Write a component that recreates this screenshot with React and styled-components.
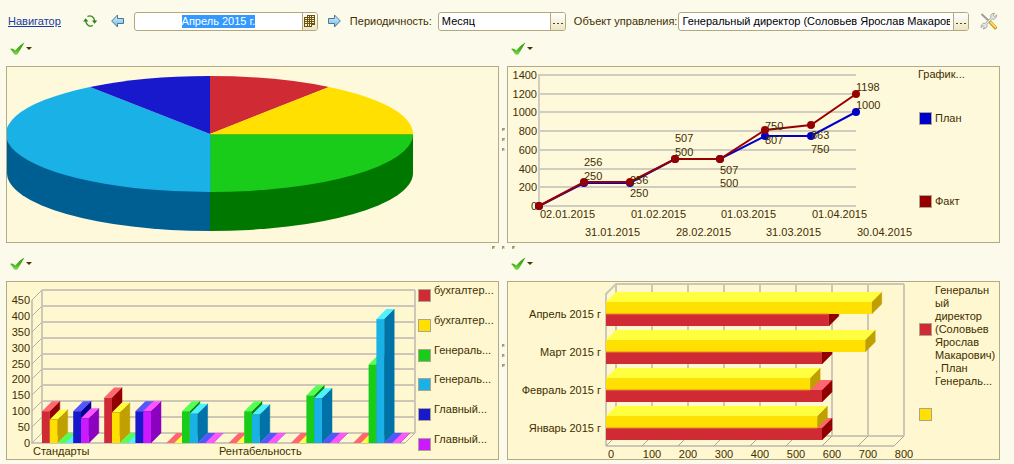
import React, { useEffect, useRef } from 'react';
import styled, { createGlobalStyle } from 'styled-components';

const COLORS = {
  red: { front: '#d02b34', top: '#ff6670', side: '#900000' },
  yellow: { front: '#ffe000', top: '#ffff40', side: '#c0a000' },
  green: { front: '#1acc1a', top: '#55ff55', side: '#008a00' },
  cyan: { front: '#1ab2e6', top: '#50f0ff', side: '#0072a8' },
  blue: { front: '#1818cc', top: '#5555ff', side: '#000090' },
  magenta: { front: '#cc1aff', top: '#ff55ff', side: '#8c00c0' },
};

const DEPTH = 10;

const App = () => {
  return (
    <>
      <GlobalStyle />
      <StylePage>
        <Toolbar />
        <StyleDashboard>
          <Widget title='Структура'>
            <PieChart />
          </Widget>
          <Splitter />
          <Widget title='График'>
            <LineChart />
            <StyleLegend $gap='70px' $top='1px'>
              <StyleLegendTitle>График...</StyleLegendTitle>
              <StyleLegendItem $align='center'>
                <StyleSwatch $color='#0000cc' />
                План
              </StyleLegendItem>
              <StyleLegendItem $align='center'>
                <StyleSwatch $color='#960000' />
                Факт
              </StyleLegendItem>
            </StyleLegend>
          </Widget>
          <StyleRowSplitter>
            <Dots />
          </StyleRowSplitter>
          <Widget title='Стандарты' dark>
            <ColumnChart />
            <StyleColumnLegend>
              {COLUMN_SERIES.map(({ color, label }, i) => (
                <StyleLegendItem key={i} $align='flex-end'>
                  <StyleSwatch $color={COLORS[color].front} />
                  <StyleRaised>{label}</StyleRaised>
                </StyleLegendItem>
              ))}
            </StyleColumnLegend>
          </Widget>
          <Splitter />
          <Widget title='План по месяцам' dark>
            <BarChart />
            <StyleLegend $gap='0' $top='2px'>
              <StyleLegendItem $align='center'>
                <StyleSwatch $color={COLORS.red.front} />
                <StyleLines>
                  {'Генеральн\nый\nдиректор\n(Соловьев\nЯрослав\nМакарович)\n, План'}
                </StyleLines>
              </StyleLegendItem>
              <StyleLegendItem $align='center'>
                <StyleSwatch $color={COLORS.yellow.front} />
                <StyleTall>Генераль...</StyleTall>
              </StyleLegendItem>
            </StyleLegend>
          </Widget>
        </StyleDashboard>
      </StylePage>
    </>
  );
};

export default App;

const Toolbar = () => {
  const dateRef = useRef(null);

  useEffect(() => {
    dateRef.current.focus();
    dateRef.current.select();
  }, []);

  return (
    <StyleToolbar>
      <StyleNavLink href='#navigator'>Навигатор</StyleNavLink>
      <StyleIconButton type='button' aria-label='Обновить' $left='21px'>
        <RefreshIcon />
      </StyleIconButton>
      <StyleIconButton type='button' aria-label='Предыдущий период' $left='13px'>
        <ArrowIcon id='prev' />
      </StyleIconButton>
      <StyleField $width='184px' $left='9px'>
        <StyleInput ref={dateRef} aria-label='Период' defaultValue='Апрель 2015 г.' $center />
        <StyleFieldButton type='button' aria-label='Выбрать период'>
          <CalendarIcon />
        </StyleFieldButton>
      </StyleField>
      <StyleIconButton type='button' aria-label='Следующий период' $left='9px'>
        <ArrowIcon id='next' flip />
      </StyleIconButton>
      <StyleLabel htmlFor='period' $left='9px'>
        Периодичность:
      </StyleLabel>
      <StyleField $width='128px' $left='6px'>
        <StyleInput id='period' defaultValue='Месяц' />
        <StyleFieldButton type='button' aria-label='Выбрать периодичность'>
          <EllipsisIcon />
        </StyleFieldButton>
      </StyleField>
      <StyleLabel htmlFor='manager' $left='8px'>
        Объект управления:
      </StyleLabel>
      <StyleField $grow $left='1px'>
        <StyleInput id='manager' defaultValue='Генеральный директор (Соловьев Ярослав Макаров' />
        <StyleFieldButton type='button' aria-label='Выбрать объект'>
          <EllipsisIcon />
        </StyleFieldButton>
      </StyleField>
      <StyleIconButton type='button' aria-label='Настройки' $left='11px'>
        <ToolsIcon />
      </StyleIconButton>
    </StyleToolbar>
  );
};

const Widget = ({ title, dark, children }) => (
  <StyleWidget aria-label={title}>
    <StyleMenuButton type='button' aria-label={`Действия: ${title}`}>
      <CheckIcon />
      <StyleCaret />
    </StyleMenuButton>
    <StylePanel $dark={dark}>{children}</StylePanel>
  </StyleWidget>
);

const Dots = () => (
  <>
    <StyleDot />
    <StyleDot />
    <StyleDot />
  </>
);

const Splitter = () => (
  <StyleSplitter>
    <Dots />
  </StyleSplitter>
);

/* charts */

const PieChart = () => (
  <StyleChart viewBox='0 0 491 175' role='img' aria-label='Круговая диаграмма'>
    <path d='M0 67 V106 A203 58 0 0 0 203 164 V67 Z' fill='#005f92' />
    <path d='M406 67 V106 A203 58 0 0 1 203 164 V67 Z' fill='#007800' />
    <path d='M203 67 V9 A203 58 0 0 1 322 20 Z' fill='#d02b34' />
    <path d='M203 67 L322 20 A203 58 0 0 1 406 67 Z' fill='#ffe000' />
    <path d='M203 67 H406 A203 58 0 0 1 203 125 Z' fill='#1acc1a' />
    <path d='M203 67 V125 A203 58 0 0 1 83 20 Z' fill='#1ab2e6' />
    <path d='M203 67 L83 20 A203 58 0 0 1 203 9 Z' fill='#1818cc' />
    <path d='M203.5 67 V125' stroke='#19b478' />
    <path d='M203 67.5 H406' stroke='#6dbb0c' />
  </StyleChart>
);

const PLAN = [0, 250, 250, 500, 500, 750, 750, 1000];
const FACT = [0, 256, 256, 507, 507, 807, 863, 1198];
const DATES = [
  '02.01.2015',
  '31.01.2015',
  '01.02.2015',
  '28.02.2015',
  '01.03.2015',
  '31.03.2015',
  '01.04.2015',
  '30.04.2015',
];
// [point index, text, baseline]
const POINT_LABELS = [
  [1, 256, 99],
  [1, 250, 113],
  [2, 256, 117],
  [2, 250, 130],
  [3, 507, 75],
  [3, 500, 89],
  [4, 507, 107],
  [4, 500, 120],
  [5, 750, 63],
  [5, 807, 77],
  [6, 863, 72],
  [6, 750, 86],
  [7, 1198, 24],
  [7, 1000, 42],
];

const lineX = (i) => Math.round(31 + (i * 317) / 7);
const lineY = (value) => Math.round(139 - (value * 131) / 1400);

const LineChart = () => {
  const ticks = [0, 200, 400, 600, 800, 1000, 1200, 1400];
  const series = [
    { values: PLAN, color: '#0000cc' },
    { values: FACT, color: '#960000' },
  ];

  return (
    <StyleChart viewBox='0 0 410 175' role='img' aria-label='План и факт'>
      <g stroke='#d0ccc0' strokeWidth='2'>
        {ticks.map((tick) => (
          <line key={tick} x1='31' x2='348' y1={lineY(tick)} y2={lineY(tick)} />
        ))}
        <line x1='31' x2='31' y1='7' y2='139' />
      </g>
      {ticks.map((tick) => (
        <text key={tick} x='29' y={lineY(tick) + 4} textAnchor='end'>
          {tick}
        </text>
      ))}
      {series.map(({ values, color }) => (
        <g key={color} fill={color}>
          <polyline
            points={values.map((v, i) => `${lineX(i)},${lineY(v)}`).join(' ')}
            fill='none'
            stroke={color}
            strokeWidth='2'
          />
          {values.map((v, i) => (
            <circle key={i} cx={lineX(i)} cy={lineY(v)} r='4' />
          ))}
        </g>
      ))}
      {POINT_LABELS.map(([i, text, y]) => (
        <text key={`${i}-${text}`} x={lineX(i)} y={y}>
          {text}
        </text>
      ))}
      {DATES.map((date, i) => (
        <text key={date} x={lineX(i) + 1} y={i % 2 ? 169 : 151}>
          {date}
        </text>
      ))}
    </StyleChart>
  );
};

const COLUMN_SERIES = [
  { color: 'red', label: 'бухгалтер...', values: [100, 143, 0, 0, 0, 0] },
  { color: 'yellow', label: 'бухгалтер...', values: [74, 96, 0, 0, 0, 0] },
  { color: 'green', label: 'Генераль...', values: [0, 0, 100, 100, 150, 247] },
  { color: 'cyan', label: 'Генераль...', values: [0, 0, 92, 90, 141, 390] },
  { color: 'blue', label: 'Главный...', values: [100, 100, 0, 0, 0, 0] },
  { color: 'magenta', label: 'Главный...', values: [78, 100, 0, 0, 0, 0] },
];

// A box drawn with an oblique projection: front, top and right faces.
const Box = ({ x, y, width, height, color }) => {
  const { front, top, side } = COLORS[color];
  const right = x + width;
  const bottom = y + height;

  return (
    <>
      <path d={`M${right} ${y} l${DEPTH} ${-DEPTH} V${bottom - DEPTH} L${right} ${bottom} Z`} fill={side} stroke={side} strokeWidth='0.5' />
      <path d={`M${x} ${y} l${DEPTH} ${-DEPTH} h${width} L${right} ${y} Z`} fill={top} />
      {height > 0 && <rect x={x} y={y} width={width} height={height} fill={front} />}
    </>
  );
};

const ColumnChart = () => {
  const ticks = [0, 50, 100, 150, 200, 250, 300, 350, 400, 450];
  const scale = 143 / 450;
  const groups = [0, 1, 2, 3, 4, 5];

  return (
    <StyleChart viewBox='0 0 410 177' role='img' aria-label='Показатели по сотрудникам'>
      <g stroke='#cdc8b6' strokeWidth='2' fill='none'>
        {ticks.map((tick) => (
          <path key={tick} d={`M35 ${Math.round(151 - tick * scale)} H408`} />
        ))}
        <path d='M25 18 V161 H398 M408 151 V8 M35 8 V151' />
      </g>
      <g stroke='#b5b0a2'>
        {ticks.map((tick) => (
          <path key={tick} d={`M25 ${Math.round(161 - tick * scale)} l10 -10`} />
        ))}
        <path d='M398 161 l10 -10' />
      </g>
      {ticks.map((tick) => (
        <text key={tick} x='23' y={Math.round(165 - tick * scale)} textAnchor='end'>
          {tick}
        </text>
      ))}
      {groups.map((group) =>
        COLUMN_SERIES.map(({ color, values }, i) => {
          const height = values[group] * scale;
          return (
            <Box
              key={`${group}-${color}`}
              x={35 + group * 62.2 + i * 7.8}
              y={161 - height}
              width={7.8}
              height={height}
              color={color}
            />
          );
        })
      )}
      <text x='26' y='173'>
        Стандарты
      </text>
      <text x='212' y='173'>
        Рентабельность
      </text>
    </StyleChart>
  );
};

const MONTHS = [
  { name: 'Апрель 2015 г', plan: 619, fact: 738 },
  { name: 'Март 2015 г', plan: 600, fact: 720 },
  { name: 'Февраль 2015 г', plan: 600, fact: 567 },
  { name: 'Январь 2015 г', plan: 600, fact: 587 },
];

const BarChart = () => {
  const ticks = [0, 100, 200, 300, 400, 500, 600, 700, 800];

  return (
    <StyleChart viewBox='0 0 410 177' role='img' aria-label='План по месяцам'>
      <g stroke='#cdc8b6' strokeWidth='2' fill='none'>
        {ticks.map((tick) => {
          const x = 108 + tick * 0.36;
          return <path key={tick} d={`M${x} 2 V154`} />;
        })}
        <path d='M98 164 V12 L108 2 H396 M108 154 H396 M98 164 H386' />
      </g>
      <g stroke='#a8a498'>
        {ticks.map((tick) => {
          const x = 108 + tick * 0.36;
          return <path key={tick} d={`M${x} 154 l-10 10`} />;
        })}
      </g>
      {ticks.map((tick) => (
        <text key={tick} x={tick ? 108 + tick * 0.36 : 103} y='176' textAnchor='middle'>
          {tick}
        </text>
      ))}
      {MONTHS.map(({ name, plan, fact }, i) => (
        <g key={name}>
          <Box x={98} y={32 + i * 38} width={plan * 0.36} height={12} color='red' />
          <Box x={98} y={20 + i * 38} width={fact * 0.36} height={12} color='yellow' />
          <path d={`M98 ${32 + i * 38} h${Math.min(plan, fact) * 0.36}`} stroke='#e8862a' />
          <text x='93' y={36 + i * 38} textAnchor='end'>
            {name}
          </text>
        </g>
      ))}
    </StyleChart>
  );
};

/* icons */

const RefreshIcon = () => (
  <svg width='16' height='14' viewBox='0 0 16 14' aria-hidden='true'>
    <g fill='none' stroke='#3a8f1c' strokeWidth='1.4'>
      <path d='M5.5 2.6 C8 1 12.2 2.4 12.6 7' />
      <path d='M10.8 11.4 C8.3 13 4.1 11.6 3.7 7' />
    </g>
    <path d='M10 6.5 H15.2 L12.6 9.8 Z' fill='#2f7d17' />
    <path d='M1.1 7.5 H6.3 L3.7 4.2 Z' fill='#2f7d17' />
  </svg>
);

const ArrowIcon = ({ id, flip }) => (
  <svg width='14' height='14' viewBox='0 0 14 14' aria-hidden='true'>
    <defs>
      <linearGradient id={id} x1='0' y1='0' x2='0' y2='1'>
        <stop offset='0' stopColor='#d8f0fc' />
        <stop offset='1' stopColor='#6fbbe8' />
      </linearGradient>
    </defs>
    <path
      d={flip ? 'M13.3 7 L7.5 1 V4.5 H1.5 V9.5 H7.5 V13 Z' : 'M0.7 7 L6.5 1 V4.5 H12.5 V9.5 H6.5 V13 Z'}
      fill={`url(#${id})`}
      stroke='#4a7892'
    />
  </svg>
);

const CalendarIcon = () => (
  <svg width='11' height='12' viewBox='0 0 11 12' aria-hidden='true' shapeRendering='crispEdges'>
    <path d='M3 0 H11 V10 H8 V12 H0 V2 H3 Z' fill='#6b5210' />
    <path
      d='M4 1h1v1h-1z M6 1h1v1h-1z M8 1h2v1h-2z M1 3h2v1h-2z M4 3h1v1h-1z M6 3h1v1h-1z M8 3h2v1h-2z M1 5h2v1h-2z M4 5h1v1h-1z M6 5h1v1h-1z M8 5h2v1h-2z M1 7h2v1h-2z M4 7h1v1h-1z M6 7h1v1h-1z M8 7h2v1h-2z M1 9h2v2h-2z M4 9h1v2h-1z M6 9h1v2h-1z'
      fill='#f7f1d2'
    />
  </svg>
);

const EllipsisIcon = () => (
  <svg width='10' height='10' viewBox='0 0 10 10' aria-hidden='true' shapeRendering='crispEdges'>
    <path d='M0 7h2v1h-2z M4 7h2v1h-2z M8 7h2v1h-2z' fill='#5e4600' />
  </svg>
);

const ToolsIcon = () => (
  <svg width='18' height='18' viewBox='0 0 18 18' aria-hidden='true'>
    <path d='M1.5 2 L10 10' stroke='#9a9a9a' strokeWidth='1.8' />
    <path d='M10.5 10.5 L15.3 15.6' stroke='#c79a1c' strokeWidth='3.4' strokeLinecap='round' />
    <path d='M10.8 10.4 L15.2 15' stroke='#ffdf5a' strokeWidth='1.8' strokeLinecap='round' />
    <path
      d='M14.6 1.2 L12 1.8 L10.6 3.6 L10.8 5.6 L5.4 11.4 L3.2 11.4 L1.4 13 L1 15.6 L3 13.8 L4.4 15 L3 17 L5.6 16.2 L7 14.6 L6.8 12.6 L12.2 7 L14.4 7 L16.2 5.4 L16.8 2.8 L14.8 4.6 L13.2 3.4 Z'
      fill='#e6e6e6'
      stroke='#999'
      strokeWidth='0.8'
    />
  </svg>
);

const CheckIcon = () => (
  <svg width='16' height='14' viewBox='0 0 16 14' aria-hidden='true'>
    <defs>
      <linearGradient id='check' x1='0' y1='0' x2='0' y2='1'>
        <stop offset='0' stopColor='#2f8f12' />
        <stop offset='0.6' stopColor='#4cb81e' />
        <stop offset='1' stopColor='#8fdc62' />
      </linearGradient>
    </defs>
    <path d='M1 7 C2.5 5.8 4.6 6.8 6.2 8.6 C8.5 6 11.5 2.5 15.5 0.5 C13 4.5 10.8 9 8.6 12.2 C7 13.6 5.4 13 4.6 11.6 C3.6 9.6 2.4 8 1 7 Z' fill='url(#check)' />
  </svg>
);

/* styles */

const GlobalStyle = createGlobalStyle`
  * {
    box-sizing: border-box;
  }
  body {
    margin: 0;
    background-color: #fcfaeb;
    color: #3f2f00;
    font-family: 'Liberation Sans', Arial, sans-serif;
    font-size: 11px;
    line-height: 13px;
  }
  button, input {
    font: inherit;
  }
  ul {
    list-style: none;
    margin: 0;
    padding: 0;
  }
`;

const StylePage = styled.main`
  padding: 0 14px 4px 6px;
`;

const StyleToolbar = styled.header`
  display: flex;
  align-items: center;
  height: 30px;
  margin-top: 6px;
  padding: 0 2px;
`;

const StyleNavLink = styled.a`
  color: #1a3a9c;
`;

const StyleIconButton = styled.button`
  display: flex;
  flex: none;
  margin-left: ${({ $left }) => $left};
  padding: 0;
  border: 0;
  background: none;
`;

const StyleLabel = styled.label`
  flex: none;
  margin-left: ${({ $left }) => $left};
`;

const StyleField = styled.div`
  display: flex;
  flex: ${({ $grow, $width }) => ($grow ? '1 1 0' : `0 0 ${$width}`)};
  min-width: 0;
  height: 19px;
  margin-left: ${({ $left }) => $left};
  border: 1px solid #b3a87c;
  border-radius: 3px;
  background-color: #fff;
  overflow: hidden;
`;

const StyleInput = styled.input`
  flex: 1;
  min-width: 0;
  padding: 1px 3px 0;
  border: 0;
  outline: 0;
  background: none;
  color: #000;
  text-align: ${({ $center }) => ($center ? 'center' : 'left')};
  &::selection {
    background-color: #3399ff;
    color: #fff;
  }
`;

const StyleFieldButton = styled.button`
  display: flex;
  flex: 0 0 15px;
  align-items: center;
  justify-content: center;
  padding: 0;
  border: 0;
  border-left: 1px solid #b3a87c;
  background: linear-gradient(#fff, #ece6c6);
`;

const StyleDashboard = styled.div`
  display: grid;
  grid-template-columns: minmax(0, 1fr) 8px minmax(0, 1fr);
`;

const StyleWidget = styled.section`
  display: flex;
  flex-direction: column;
`;

const StyleMenuButton = styled.button`
  display: flex;
  align-items: center;
  align-self: flex-start;
  gap: 1px;
  height: 30px;
  padding: 0 3px 5px;
  border: 0;
  background: none;
`;

const StyleCaret = styled.span`
  border: 3px solid transparent;
  border-top-color: #4a3600;
  border-bottom: 0;
`;

const StylePanel = styled.div`
  display: flex;
  border: 1px solid #b3ab85;
  background-color: ${({ $dark }) => ($dark ? '#fef7cf' : '#fff9dc')};
`;

const StyleChart = styled.svg`
  display: block;
  flex: 1;
  min-width: 0;
  height: auto;
  text {
    fill: #3f2f00;
    font-size: 11px;
  }
`;

const StyleLegend = styled.ul`
  display: flex;
  flex: 0 0 81px;
  flex-direction: column;
  gap: ${({ $gap }) => $gap};
  padding-top: ${({ $top }) => $top};
`;

const StyleColumnLegend = styled(StyleLegend)`
  justify-content: space-between;
  padding: 2px 0 8px;
`;

const StyleLegendTitle = styled.li`
  margin-bottom: -39px;
`;

const StyleLegendItem = styled.li`
  display: flex;
  align-items: ${({ $align }) => $align};
  gap: 3px;
  padding-left: 1px;
`;

const StyleSwatch = styled.span`
  flex: none;
  width: 13px;
  height: 13px;
  border: 1px solid #aaa58c;
  background-color: ${({ $color }) => $color};
`;

const StyleRaised = styled.span`
  padding-bottom: 5px;
`;

const StyleLines = styled.span`
  white-space: pre;
`;

const StyleTall = styled.span`
  height: 78px;
`;

const StyleSplitter = styled.div`
  display: flex;
  flex-direction: column;
  align-items: center;
  justify-content: center;
  gap: 7px;
`;

const StyleRowSplitter = styled.div`
  display: flex;
  grid-column: 1 / -1;
  align-items: center;
  justify-content: center;
  gap: 7px;
  height: 8px;
`;

const StyleDot = styled.span`
  width: 3px;
  height: 3px;
  background: linear-gradient(135deg, #a39a70 50%, #ddd7bb 50%);
`;
